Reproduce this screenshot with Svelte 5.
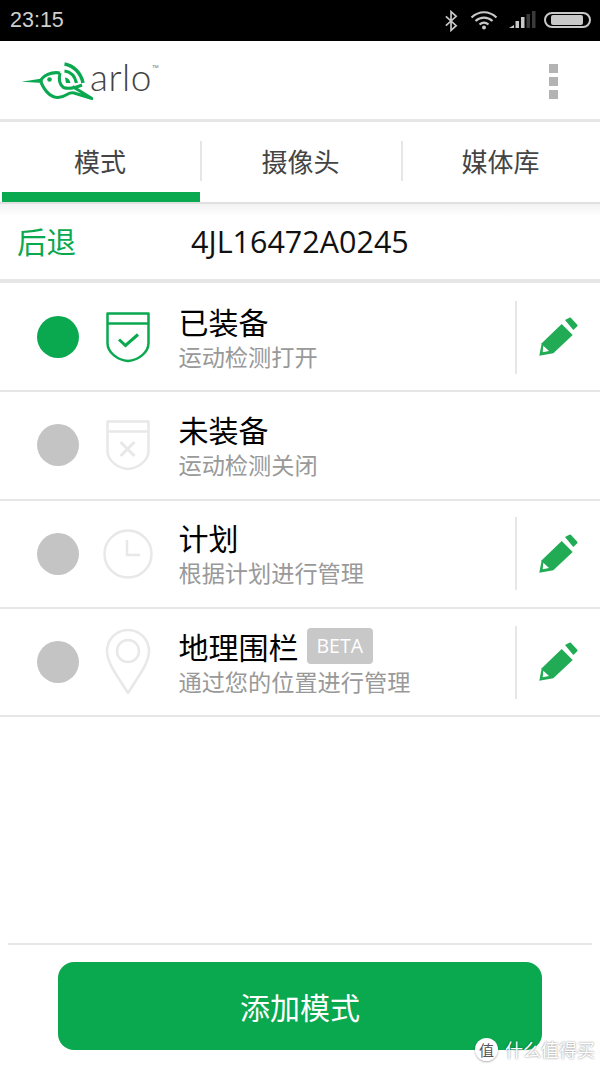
<script lang="ts">
  const tabs = ['模式', '摄像头', '媒体库'];

  const modes = [
    { title: '已装备', sub: '运动检测打开', icon: 'armed', active: true, edit: true },
    { title: '未装备', sub: '运动检测关闭', icon: 'disarmed', active: false, edit: false },
    { title: '计划', sub: '根据计划进行管理', icon: 'clock', active: false, edit: true },
    { title: '地理围栏', sub: '通过您的位置进行管理', icon: 'pin', active: false, edit: true, beta: true },
  ];
</script>

<div class="screen">
  <div class="statusbar">
    <span class="time">23:15</span>
    <div class="status-icons">
      <svg width="15" height="22" viewBox="0 0 16 22" class="bt">
        <path d="M2 6l11 10-5.500 5V1L13 6 2 16" fill="none" stroke="#c8c8c8" stroke-width="1.800" />
      </svg>
      <svg width="28" height="20" viewBox="0 0 28 20" class="wifi">
        <path d="M1.500 7.500C9 .5 19 .5 26.500 7.500M5.500 11C10.500 6.500 17.500 6.500 22.500 11M9.500 14.500C12.500 12 15.500 12 18.500 14.500" fill="none" stroke="#c8c8c8" stroke-width="2.200" />
        <circle cx="14" cy="17.500" r="2" fill="#c8c8c8" />
      </svg>
      <svg width="28" height="18" viewBox="0 0 28 18" class="signal">
        <path d="M1 17l5-3v3z" fill="#c8c8c8" />
        <rect x="7.500" y="10" width="3.500" height="7" fill="#c8c8c8" />
        <rect x="13" y="6" width="3.500" height="11" fill="#c8c8c8" />
        <rect x="18.500" y="3" width="3.500" height="14" fill="#3a3a3a" />
        <rect x="24" y="0" width="3.500" height="17" fill="#3a3a3a" />
      </svg>
      <div class="battery"><div class="battery-fill"></div></div>
    </div>
  </div>

  <header class="topbar">
    <div class="logo">
      <svg width="72" height="42" viewBox="0 0 72 42">
        <path d="M.5 21.700L21 18.500 22 23z" fill="#0aa84f" />
        <g fill="none" stroke="#0aa84f" stroke-linejoin="round">
          <path d="M19.500 21C22 15.500 30 11.500 39 13" stroke-width="3.200" />
          <path d="M20 22.500C23 29 27 34.500 32 36.500 37 38.500 42 37 46 34.500 48.500 33 50.500 32.500 53 33L71 38.500 51.500 26.500" stroke-width="3" />
          <path d="M39 13C37.500 19 38.500 24.500 42.500 27.500 47.500 29.500 55 27.500 61 25" stroke-width="3" />
          <path d="M43.500 4c9 1.500 16.500 9 18.500 19" stroke-width="3.400" />
          <path d="M43.500 11c6 .8 10.500 5.500 12 12" stroke-width="3.200" />
        </g>
        <path d="M44 17.500c3 .3 5 2.500 5.500 5.500h-4.500z" fill="#0aa84f" />
        <circle cx="28.500" cy="19.500" r="2.300" fill="#0aa84f" />
      </svg>
      <span class="wordmark">arlo</span><span class="tm">™</span>
    </div>
    <div class="menu"><i></i><i></i><i></i></div>
  </header>

  <nav class="tabs">
    {#each tabs as tab, i}
      <div class="tab" class:selected={i === 0}>
        <span>{tab}</span>
      </div>
    {/each}
  </nav>

  <div class="backrow">
    <span class="back">后退</span>
    <span class="serial">4JL16472A0245</span>
  </div>

  <ul class="modes">
    {#each modes as mode}
      <li class="mode">
        <span class="radio" class:on={mode.active}></span>
        <span class="mode-icon">
          {#if mode.icon === 'armed' || mode.icon === 'disarmed'}
            <svg width="46" height="52" viewBox="0 0 46 52" fill="none" stroke={mode.active ? '#0aa84f' : '#e8e8e8'} stroke-width="2.500">
              <path d="M2.500 2.500h41V32C43.500 42 33 49 23 50 13 49 2.500 42 2.500 32z" stroke-linejoin="round" />
              <path d="M2.500 12.500h41" />
              {#if mode.icon === 'armed'}
                <path d="M14 28.500l6.500 6L33 23.500" stroke-width="3" />
              {:else}
                <path d="M15.500 23l14 14M29.500 23l-14 14" stroke-width="3" />
              {/if}
            </svg>
          {:else if mode.icon === 'clock'}
            <svg width="52" height="52" viewBox="0 0 52 52" fill="none" stroke="#e8e8e8" stroke-width="2.500">
              <circle cx="26" cy="26" r="23.500" />
              <path d="M25 12v15h13" />
            </svg>
          {:else}
            <svg width="46" height="68" viewBox="0 0 46 68" fill="none" stroke="#e8e8e8" stroke-width="2.500">
              <path d="M23 65C14 50 2 36 2 23a21 21 0 0 1 42 0C44 36 32 50 23 65z" stroke-linejoin="round" />
              <circle cx="23" cy="23" r="11" />
            </svg>
          {/if}
        </span>
        <div class="mode-text">
          <div class="mode-title">
            {mode.title}
            {#if mode.beta}<span class="beta">BETA</span>{/if}
          </div>
          <div class="mode-sub">{mode.sub}</div>
        </div>
        {#if mode.edit}
          <div class="edit">
            <svg width="40" height="40" viewBox="0 0 40 40">
              <path d="M26 3l4.300-2.300a1.500 1.500 0 0 1 1.500 0l6.500 7a1.500 1.500 0 0 1 0 1.500L34.300 13z" fill="#22ab55" />
              <path d="M22.700 7L33.700 18 14.300 36.300 .3 38.700 2.700 26.300z" fill="#22ab55" />
              <path d="M4.300 28.700L10 34 3.700 35.300z" fill="#fff" />
            </svg>
          </div>
        {/if}
      </li>
    {/each}
  </ul>

  <div class="spacer"></div>

  <footer class="footer">
    <button class="add">添加模式</button>
  </footer>

  <div class="watermark">
    <span class="wm-badge">值</span>
    <span class="wm-text">什么值得买</span>
  </div>
</div>

<style>
  :global(body) {
    margin: 0;
    background: #fff;
  }

  .screen {
    position: relative;
    width: 600px;
    height: 1067px;
    display: flex;
    flex-direction: column;
    overflow: hidden;
    background: #fff;
    font-family: "Noto Sans CJK SC", "Liberation Sans", sans-serif;
  }

  .statusbar {
    height: 41px;
    flex: none;
    background: #000;
    display: flex;
    align-items: center;
    justify-content: space-between;
    padding: 0 9px 0 10px;
    box-sizing: border-box;
  }

  .time {
    font-family: "Liberation Sans", sans-serif;
    font-size: 21.500px;
    color: #cfcfcf;
    margin-bottom: 1px;
  }

  .status-icons {
    display: flex;
    align-items: center;
  }

  .wifi {
    margin-left: 11px;
    margin-bottom: 2px;
  }

  .signal {
    margin-left: 10px;
    margin-bottom: 1px;
  }

  .battery {
    width: 47px;
    height: 16px;
    box-sizing: border-box;
    margin-left: 8px;
    border: 2px solid #c8c8c8;
    border-radius: 8px;
    display: flex;
    align-items: center;
    padding-left: 5px;
    margin-bottom: 1px;
  }

  .battery-fill {
    width: 32px;
    height: 10px;
    background: #c8c8c8;
    border-radius: 2px;
  }

  .topbar {
    height: 78px;
    flex: none;
    border-bottom: 3px solid #e6e6e6;
    display: flex;
    align-items: center;
    justify-content: space-between;
    padding: 0 42px 0 21px;
  }

  .logo {
    display: flex;
    align-items: flex-start;
    margin-top: 2px;
  }

  .wordmark {
    font-family: Lato, sans-serif;
    font-weight: 300;
    font-size: 37px;
    line-height: 40px;
    color: #444;
    margin-left: -3px;
    margin-top: -3px;
    letter-spacing: 0.5px;
  }

  .tm {
    font-family: "Liberation Sans", sans-serif;
    font-size: 7px;
    color: #777;
    margin-top: 4px;
  }

  .menu {
    display: flex;
    flex-direction: column;
    gap: 4px;
    margin-top: 2px;
  }

  .menu i {
    display: block;
    width: 9px;
    height: 9px;
    background: #b3b3b3;
  }

  .tabs {
    height: 80px;
    flex: none;
    display: grid;
    grid-template-columns: 200px 201px 199px;
    border-bottom: 2px solid #e0e0e0;
    position: relative;
  }

  .tab {
    position: relative;
    display: flex;
    justify-content: center;
    padding-top: 19px;
    font-size: 26px;
    line-height: 40px;
    color: #444;
  }

  .tab + .tab::before {
    content: '';
    position: absolute;
    left: 0;
    top: 19px;
    height: 40px;
    width: 2px;
    background: #e6e6e6;
  }

  .tab.selected::after {
    content: '';
    position: absolute;
    left: 2px;
    right: 0;
    bottom: 0;
    height: 10px;
    background: #0aa84f;
  }

  .backrow {
    height: 75px;
    flex: none;
    border-bottom: 4px solid #e6e6e6;
    display: flex;
    align-items: center;
    padding-left: 17px;
    background: linear-gradient(#f2f2f2, #fff 12px);
  }

  .back {
    font-size: 29.500px;
    color: #0aa84f;
    width: 174px;
    margin-bottom: 4px;
  }

  .serial {
    font-family: "Open Sans", "Liberation Sans", sans-serif;
    font-size: 30.500px;
    color: #111;
    margin-bottom: 2px;
  }

  .modes {
    list-style: none;
    margin: 0;
    padding: 1px 0 0;
  }

  .mode {
    height: 106.300px;
    border-bottom: 2px solid #e6e6e6;
    display: flex;
    align-items: center;
    position: relative;
  }

  .radio {
    flex: none;
    width: 42px;
    height: 42px;
    margin-left: 36.500px;
    border-radius: 50%;
    background: #c4c4c4;
  }

  .radio.on {
    background: #0aa84f;
  }

  .mode-icon {
    flex: none;
    width: 52px;
    margin-left: 23.500px;
    display: flex;
    justify-content: center;
  }

  .mode-text {
    flex: 1;
    margin-left: 24.500px;
  }

  .mode-title {
    font-size: 30px;
    line-height: 38px;
    color: #000;
    display: flex;
    align-items: center;
    gap: 8px;
    margin-top: -1px;
  }

  .beta {
    font-family: "Open Sans", "Liberation Sans", sans-serif;
    font-size: 19.500px;
    line-height: 36px;
    height: 36px;
    padding: 0 10px;
    border-radius: 4px;
    background: #c8c8c8;
    color: #fff;
  }

  .mode-sub {
    font-size: 23.200px;
    line-height: 32px;
    color: #999;
  }

  .edit {
    flex: none;
    width: 85px;
    height: 73px;
    box-sizing: border-box;
    border-left: 2px solid #e6e6e6;
    display: flex;
    align-items: center;
    padding-left: 22px;
  }

  .spacer {
    flex: 1;
  }

  .footer {
    flex: none;
    margin: 0 8px;
    height: 124px;
    border-top: 2px solid #e6e6e6;
    padding: 17px 50px 0;
    box-sizing: border-box;
  }

  .add {
    display: block;
    width: 100%;
    height: 88px;
    border: none;
    border-radius: 16px;
    background: #0aa84f;
    color: #fff;
    font-family: inherit;
    font-size: 30px;
  }

  .watermark {
    position: absolute;
    right: 5px;
    bottom: 5px;
    display: flex;
    align-items: center;
    gap: 7px;
  }

  .wm-badge {
    width: 23px;
    height: 23px;
    border-radius: 50%;
    background: #fff;
    color: #555;
    font-size: 15px;
    line-height: 23px;
    text-align: center;
    box-shadow: 0 1px 2px rgba(0, 0, 0, 0.3);
  }

  .wm-text {
    font-size: 18px;
    color: #fff;
    text-shadow: 0 0 2px rgba(0, 0, 0, 0.55);
  }
</style>
